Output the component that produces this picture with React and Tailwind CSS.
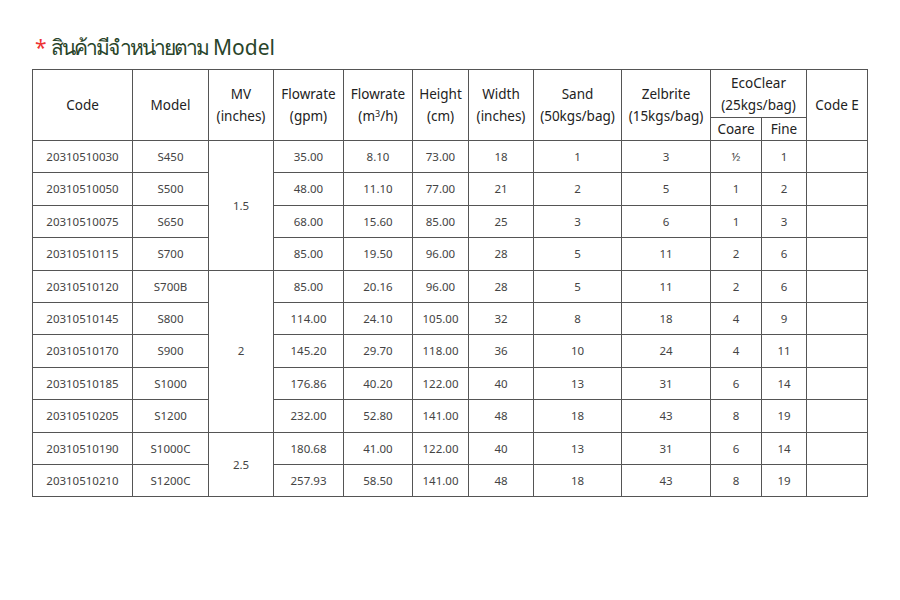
import React from "react";

const rows = [
  ["20310510030", "S450", "35.00", "8.10", "73.00", "18", "1", "3", "½", "1"],
  ["20310510050", "S500", "48.00", "11.10", "77.00", "21", "2", "5", "1", "2"],
  ["20310510075", "S650", "68.00", "15.60", "85.00", "25", "3", "6", "1", "3"],
  ["20310510115", "S700", "85.00", "19.50", "96.00", "28", "5", "11", "2", "6"],
  ["20310510120", "S700B", "85.00", "20.16", "96.00", "28", "5", "11", "2", "6"],
  ["20310510145", "S800", "114.00", "24.10", "105.00", "32", "8", "18", "4", "9"],
  ["20310510170", "S900", "145.20", "29.70", "118.00", "36", "10", "24", "4", "11"],
  ["20310510185", "S1000", "176.86", "40.20", "122.00", "40", "13", "31", "6", "14"],
  ["20310510205", "S1200", "232.00", "52.80", "141.00", "48", "18", "43", "8", "19"],
  ["20310510190", "S1000C", "180.68", "41.00", "122.00", "40", "13", "31", "6", "14"],
  ["20310510210", "S1200C", "257.93", "58.50", "141.00", "48", "18", "43", "8", "19"],
];

const mv = { 0: ["1.5", 4], 4: ["2", 5], 9: ["2.5", 2] };

const th = "border border-[#555] font-normal text-[13.5px] leading-[22px] text-[#222] text-center align-middle p-0";
const td = "border border-[#555] text-[11.5px] text-[#444] text-center align-middle p-0 h-[32.4px]";

export default function App() {
  return (
    <div className="w-[900px] h-[600px] bg-white" style={{ fontFamily: '"Noto Sans", sans-serif' }}>
      <div className="pt-[31px] pl-[35px] h-[69px] text-[21px] leading-[32px] text-[#2a452a]">
        <span className="text-[#e33] mr-[4px]">*</span>
        <span className="tracking-[-2px]">สินค้ามีจำหน่ายตาม</span> Model
      </div>
      <table className="ml-[32px] border-collapse table-fixed w-[835px]">
        <colgroup>
          <col className="w-[100px]" />
          <col className="w-[76px]" />
          <col className="w-[65px]" />
          <col className="w-[70px]" />
          <col className="w-[69px]" />
          <col className="w-[56px]" />
          <col className="w-[65px]" />
          <col className="w-[88px]" />
          <col className="w-[89px]" />
          <col className="w-[51px]" />
          <col className="w-[45px]" />
          <col className="w-[61px]" />
        </colgroup>
        <thead>
          <tr className="h-[48px]">
            <th rowSpan={2} className={th}>Code</th>
            <th rowSpan={2} className={th}>Model</th>
            <th rowSpan={2} className={th}>MV<br />(inches)</th>
            <th rowSpan={2} className={th}>Flowrate<br />(gpm)</th>
            <th rowSpan={2} className={th}>Flowrate<br />(m<sup className="text-[9px]">3</sup>/h)</th>
            <th rowSpan={2} className={th}>Height<br />(cm)</th>
            <th rowSpan={2} className={th}>Width<br />(inches)</th>
            <th rowSpan={2} className={th}>Sand<br />(50kgs/bag)</th>
            <th rowSpan={2} className={th}>Zelbrite<br />(15kgs/bag)</th>
            <th colSpan={2} className={th}>EcoClear<br />(25kgs/bag)</th>
            <th rowSpan={2} className={th}>Code E</th>
          </tr>
          <tr className="h-[21px]">
            <th className={th}>Coare</th>
            <th className={th}>Fine</th>
          </tr>
        </thead>
        <tbody>
          {rows.map((r, i) => (
            <tr key={i}>
              <td className={td}>{r[0]}</td>
              <td className={td}>{r[1]}</td>
              {mv[i] && (
                <td rowSpan={mv[i][1]} className={td}>{mv[i][0]}</td>
              )}
              {r.slice(2).map((c, j) => (
                <td key={j} className={td}>{c}</td>
              ))}
              <td className={td}></td>
            </tr>
          ))}
        </tbody>
      </table>
    </div>
  );
}
